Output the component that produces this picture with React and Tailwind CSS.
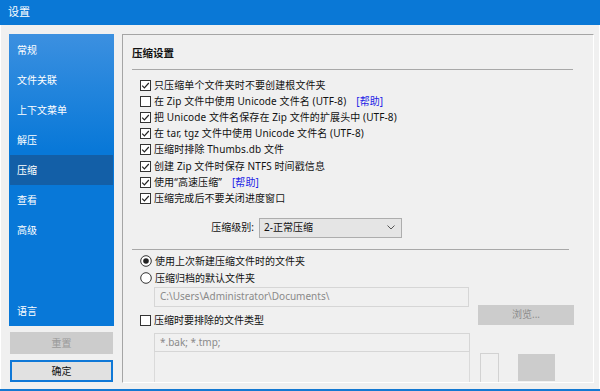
import React from "react";

const navItems = ["常规", "文件关联", "上下文菜单", "解压", "压缩", "查看", "高级"];

const options = [
  { label: "只压缩单个文件夹时不要创建根文件夹", checked: true },
  { label: "在 Zip 文件中使用 Unicode 文件名 (UTF-8)", checked: false, help: true },
  { label: "把 Unicode 文件名保存在 Zip 文件的扩展头中 (UTF-8)", checked: true },
  { label: "在 tar, tgz 文件中使用 Unicode 文件名 (UTF-8)", checked: true },
  { label: "压缩时排除 Thumbs.db 文件", checked: true },
  { label: "创建 Zip 文件时保存 NTFS 时间戳信息", checked: true },
  { label: "使用“高速压缩”", checked: true, help: true },
  { label: "压缩完成后不要关闭进度窗口", checked: true },
];

function CheckBox({ checked }) {
  return (
    <svg width="11" height="11" viewBox="0 0 11 11" className="shrink-0">
      <rect x="0.5" y="0.5" width="10" height="10" fill="#fff" stroke="#333" />
      {checked && (
        <polyline
          points="2.2,5.6 4.4,7.8 8.8,3"
          fill="none"
          stroke="#222"
          strokeWidth="1.2"
        />
      )}
    </svg>
  );
}

function Radio({ checked }) {
  return (
    <svg width="12" height="12" viewBox="0 0 12 12" className="shrink-0">
      <circle cx="6" cy="6" r="5.3" fill="#fff" stroke="#333" />
      {checked && <circle cx="6" cy="6" r="2.8" fill="#222" />}
    </svg>
  );
}

export default function App() {
  return (
    <div className="w-[600px] h-[391px] bg-[#f0f0f0] flex flex-col overflow-hidden border-b-2 border-[#1479d2] font-['Noto_Sans','Noto_Sans_CJK_SC',sans-serif] text-[10px] text-[#111]">
      {/* Title bar */}
      <div className="h-[25px] shrink-0 bg-[#0a78d6] text-white flex items-center pl-[8px] text-[11px]">
        设置
      </div>

      <div className="flex flex-1 pt-[9px] pl-[8px] border-x border-white">
        {/* Sidebar */}
        <div className="w-[105px] flex flex-col">
          <div className="h-[292px] bg-[linear-gradient(180deg,#3c90e0_0%,#2184dc_20%,#0878d8_40%,#0878d8_100%)] flex flex-col pt-[1px] px-[1px] text-white">
            {navItems.map((item) => (
              <div
                key={item}
                className={`h-[30px] flex items-center pl-[7px] ${
                  item === "压缩" ? "bg-[#135fa7]" : ""
                }`}
              >
                {item}
              </div>
            ))}
            <div className="flex-1" />
            <div className="h-[30px] flex items-center pl-[7px]">语言</div>
          </div>
          <div className="mt-[6px] h-[22px] mx-[1px] bg-[#cccccc] text-[#9a9a9a] flex items-center justify-center">
            重置
          </div>
          <div className="mt-[6px] h-[22px] mx-[1px] bg-[#e1e1e1] border-2 border-[#0f78d7] flex items-center justify-center">
            确定
          </div>
        </div>

        {/* Content panel */}
        <div className="ml-[8px] w-[472px] h-[349px] border-t border-l border-[#a5a5a5] border-r border-b border-r-white border-b-white flex flex-col pl-[9px] overflow-hidden">
          <div className="mt-[12px] h-[14px] flex items-center font-bold text-[10.5px]">
            压缩设置
          </div>
          <div className="mt-[8px] w-[441px] border-t border-[#a8a8a8]" />

          <div className="mt-[7px] flex flex-col pl-[8px] tracking-[0.1px]">
            {options.map((o) => (
              <div key={o.label} className="h-[16.2px] flex items-center">
                <CheckBox checked={o.checked} />
                <span className="ml-[3px] whitespace-nowrap">{o.label}</span>
                {o.help && (
                  <span className="ml-[10px] text-[#2323e6]">[帮助]</span>
                )}
              </div>
            ))}
          </div>

          <div className="mt-[11px] flex items-center">
            <div className="ml-[76px] w-[46px] text-right whitespace-nowrap">压缩级别:</div>
            <div className="ml-[5px] w-[143px] h-[20px] bg-[#e5e5e5] border border-[#adadad] flex items-center pl-[4px] pr-[6px]">
              <span className="flex-1">2-正常压缩</span>
              <svg width="8" height="5" viewBox="0 0 8 5">
                <polyline points="0.5,0.5 4,4 7.5,0.5" fill="none" stroke="#555" strokeWidth="1" />
              </svg>
            </div>
          </div>

          <div className="mt-[11px] w-[437px] border-t border-[#a8a8a8]" />

          <div className="mt-[3px] pl-[8px] flex flex-col">
            <div className="h-[17px] flex items-center">
              <Radio checked />
              <span className="ml-[3px]">使用上次新建压缩文件时的文件夹</span>
            </div>
            <div className="h-[17px] flex items-center">
              <Radio />
              <span className="ml-[3px]">压缩归档的默认文件夹</span>
            </div>
          </div>

          <div className="flex">
            <div className="flex flex-col w-[330px]">
              <div className="ml-[22px] w-[315px] h-[20px] border border-[#d6d6d6] flex items-center pl-[5px] text-[#8a8a8a]">
                C:\Users\Administrator\Documents\
              </div>
              <div className="mt-[6px] h-[16px] pl-[8px] flex items-center">
                <CheckBox />
                <span className="ml-[3px]">压缩时要排除的文件类型</span>
              </div>
              <div className="mt-[4px] ml-[22px] w-[316px] h-[19px] border border-[#d6d6d6] flex items-center pl-[5px] text-[#8a8a8a]">
                *.bak; *.tmp;
              </div>
              <div className="ml-[22px] w-[316px] h-[40px] border-r border-l border-[#dadada]" />
            </div>
            <div className="flex flex-col ml-[16px]">
              <div className="mt-[18px] w-[96px] h-[20px] bg-[#cccccc] text-[#8c8c8c] flex items-center justify-center">
                浏览...
              </div>
              <div className="flex">
                <div className="mt-[28px] ml-[2px] w-[19px] h-[40px] border-t border-x border-[#d2d2d2]" />
                <div className="mt-[29px] ml-[19px] w-[37px] h-[27px] bg-[#cccccc]" />
              </div>
            </div>
          </div>
        </div>
      </div>
    </div>
  );
}
